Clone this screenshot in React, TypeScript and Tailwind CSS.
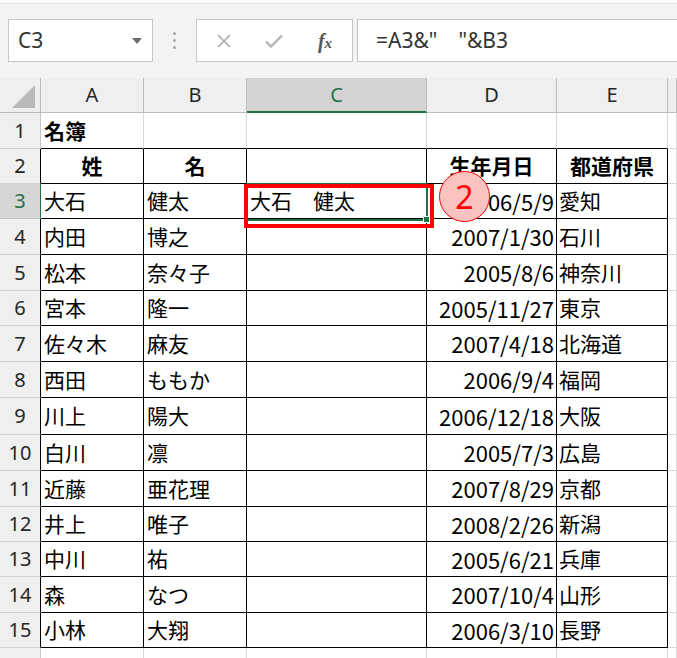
import React from "react";

const rows: [string, string, string, string, string][] = [
  ["大石", "健太", "大石\u3000健太", "2006/5/9", "愛知"],
  ["内田", "博之", "", "2007/1/30", "石川"],
  ["松本", "奈々子", "", "2005/8/6", "神奈川"],
  ["宮本", "隆一", "", "2005/11/27", "東京"],
  ["佐々木", "麻友", "", "2007/4/18", "北海道"],
  ["西田", "ももか", "", "2006/9/4", "福岡"],
  ["川上", "陽大", "", "2006/12/18", "大阪"],
  ["白川", "凛", "", "2005/7/3", "広島"],
  ["近藤", "亜花理", "", "2007/8/29", "京都"],
  ["井上", "唯子", "", "2008/2/26", "新潟"],
  ["中川", "祐", "", "2005/6/21", "兵庫"],
  ["森", "なつ", "", "2007/10/4", "山形"],
  ["小林", "大翔", "", "2006/3/10", "長野"],
];

const heights = [36, 35, 35, 36, 36, 35, 36, 36, 37, 36, 36, 35, 35, 36, 35];

const cellFont = { fontFamily: '"Noto Sans CJK JP", "Noto Sans", sans-serif' };
const uiFont = { fontFamily: '"Noto Sans", "Open Sans", sans-serif' };

function RowHeader({ n, h }: { n: number; h: number }) {
  const sel = n === 3;
  const table = n >= 2;
  return (
    <div
      className={
        "flex items-center justify-center border-b border-r text-[20px] " +
        (sel
          ? "bg-[#d6d6d6] text-[#217346] border-b-[#c4c4c4] border-r-[#217346]"
          : table
          ? "bg-[#efefef] text-[#262626] border-b-[#d4d4d4] border-r-black"
          : "bg-[#efefef] text-[#262626] border-b-[#d4d4d4] border-r-[#c6c6c6]")
      }
      style={{ ...uiFont, height: h }}
    >
      {n}
    </div>
  );
}

export default function App() {
  return (
    <div className="relative w-[677px] h-[658px] overflow-hidden bg-[#f3f3f3]">
      {/* top strip */}
      <div className="h-[4px] bg-[#fbfbfb] border-b border-[#e3e3e3]" />
      {/* formula bar */}
      <div className="h-[74px] flex items-start pt-[15px] pl-[8px]">
        <div className="w-[145px] h-[43px] bg-white border border-[#c6c6c6] flex items-center justify-between pl-[9px] pr-[10px]">
          <span className="text-[21px] text-[#333]" style={uiFont}>C3</span>
          <svg width="10" height="6" viewBox="0 0 10 6">
            <polygon points="0,0 10,0 5,6" fill="#6b6b6b" />
          </svg>
        </div>
        <div className="w-[43px] h-[43px] flex flex-col items-center justify-center gap-[4px]">
          <div className="w-[3px] h-[3px] rounded-full bg-[#a8a8a8]" />
          <div className="w-[3px] h-[3px] rounded-full bg-[#a8a8a8]" />
          <div className="w-[3px] h-[3px] rounded-full bg-[#a8a8a8]" />
        </div>
        <div className="w-[157px] h-[43px] bg-white border border-[#c6c6c6] flex items-center">
          <div className="w-[52px] flex justify-center pl-[2px]">
            <svg width="14" height="14" viewBox="0 0 14 14">
              <path d="M1 1 L13 13 M13 1 L1 13" stroke="#a9a9a9" strokeWidth="1.6" fill="none" />
            </svg>
          </div>
          <div className="w-[50px] flex justify-center">
            <svg width="18" height="14" viewBox="0 0 18 14">
              <path d="M1 7.5 L6 12.5 L17 1.5" stroke="#b4b4b4" strokeWidth="2.4" fill="none" />
            </svg>
          </div>
          <div className="w-[52px] flex justify-center">
            <span className="italic font-bold text-[20px] text-[#555] leading-none" style={{ fontFamily: '"Liberation Serif", serif' }}>
              f<span className="text-[15px]">x</span>
            </span>
          </div>
        </div>
        <div className="ml-[4px] flex-1 h-[43px] bg-white border border-r-0 border-[#c6c6c6] flex items-center pl-[18px]">
          <span className="text-[21px] text-[#333]" style={uiFont}>
            =A3&amp;"{"\u3000"}"&amp;B3
          </span>
        </div>
      </div>

      {/* sheet grid */}
      <div className="grid grid-cols-[41px_103px_103px_180px_130px_111px_1fr] bg-white">
        {/* column header row */}
        <div className="h-[35px] bg-[#efefef] border-r border-b border-[#bdbdbd] relative">
          <svg className="absolute left-0 top-0" width="40" height="34" viewBox="0 0 40 34">
            <polygon points="35,7 35,30 12,30" fill="#b9b9b9" />
          </svg>
        </div>
        {["A", "B", "C", "D", "E", ""].map((c) => (
          <div
            key={c || "F"}
            className={
              "h-[35px] flex items-center justify-center border-r text-[20px] " +
              (c === "C"
                ? "bg-[#d3d3d3] text-[#217346] border-r-[#bdbdbd] border-b-2 border-b-[#217346]"
                : "bg-[#efefef] text-[#262626] border-r-[#bdbdbd] border-b border-b-[#bdbdbd]")
            }
            style={uiFont}
          >
            {c}
          </div>
        ))}

        {/* row 1 */}
        <RowHeader n={1} h={heights[0]} />
        <div className="border-r border-r-[#d9d9d9] border-b border-b-black flex items-center pl-[3px] text-[21px] font-bold text-black" style={{ ...cellFont, height: heights[0] }}>
          名簿
        </div>
        {[0, 1, 2, 3].map((i) => (
          <div key={i} className="border-r border-r-[#d9d9d9] border-b border-b-black" style={{ height: heights[0] }} />
        ))}
        <div className="border-r border-r-[#d9d9d9] border-b border-b-[#d9d9d9]" style={{ height: heights[0] }} />

        {/* row 2 */}
        <RowHeader n={2} h={heights[1]} />
        {["姓", "名", "", "生年月日", "都道府県"].map((t, i) => (
          <div
            key={i}
            className="border-r border-b border-black flex items-center justify-center text-[21px] font-bold text-black"
            style={{ ...cellFont, height: heights[1] }}
          >
            {t}
          </div>
        ))}
        <div className="border-r border-b border-[#d9d9d9]" style={{ height: heights[1] }} />

        {rows.map((r, idx) => {
          const n = idx + 3;
          const h = heights[idx + 2];
          return (
            <React.Fragment key={n}>
              <RowHeader n={n} h={h} />
              <div className="border-r border-b border-black flex items-center pl-[3px] text-[21px] text-black whitespace-nowrap" style={{ ...cellFont, height: h }}>
                {r[0]}
              </div>
              <div className="border-r border-b border-black flex items-center pl-[3px] text-[21px] text-black whitespace-nowrap" style={{ ...cellFont, height: h }}>
                {r[1]}
              </div>
              <div className="border-r border-b border-black flex items-center pl-[3px] text-[21px] text-black whitespace-nowrap" style={{ ...cellFont, height: h }}>
                {r[2]}
              </div>
              <div className="border-r border-b border-black flex items-center justify-end pr-[2px] text-[22px] text-black whitespace-nowrap" style={{ ...cellFont, height: h }}>
                {r[3]}
              </div>
              <div className="border-r border-b border-black flex items-center pl-[2px] text-[21px] text-black whitespace-nowrap" style={{ ...cellFont, height: h }}>
                {r[4]}
              </div>
              <div className="border-r border-b border-[#d9d9d9]" style={{ height: h }} />
            </React.Fragment>
          );
        })}

        {/* row 16 partial */}
        <div className="h-[20px] bg-[#efefef] border-r border-[#c6c6c6]" />
        {[0, 1, 2, 3, 4, 5].map((i) => (
          <div key={i} className="h-[20px] border-r border-[#d9d9d9]" />
        ))}
      </div>

      {/* selection of C3 */}
      <div className="absolute left-[246px] top-[183px] w-[182px] h-[38px] border-2 border-[#217346]">
        <div className="absolute right-[-4px] bottom-[-4px] w-[7px] h-[7px] bg-[#217346] border border-white" />
      </div>

      {/* red annotation box */}
      <div className="absolute left-[244px] top-[184px] w-[190px] h-[44px] border-[4px] border-[#ff0000]" />

      {/* numbered circle */}
      <div
        className="absolute left-[439px] top-[171px] w-[51px] h-[51px] rounded-full bg-[#fbc2c2] border-[1.5px] border-[#ff0000] flex items-center justify-center text-[32px] text-[#ff0000] leading-none"
        style={uiFont}
      >
        2
      </div>
    </div>
  );
}
